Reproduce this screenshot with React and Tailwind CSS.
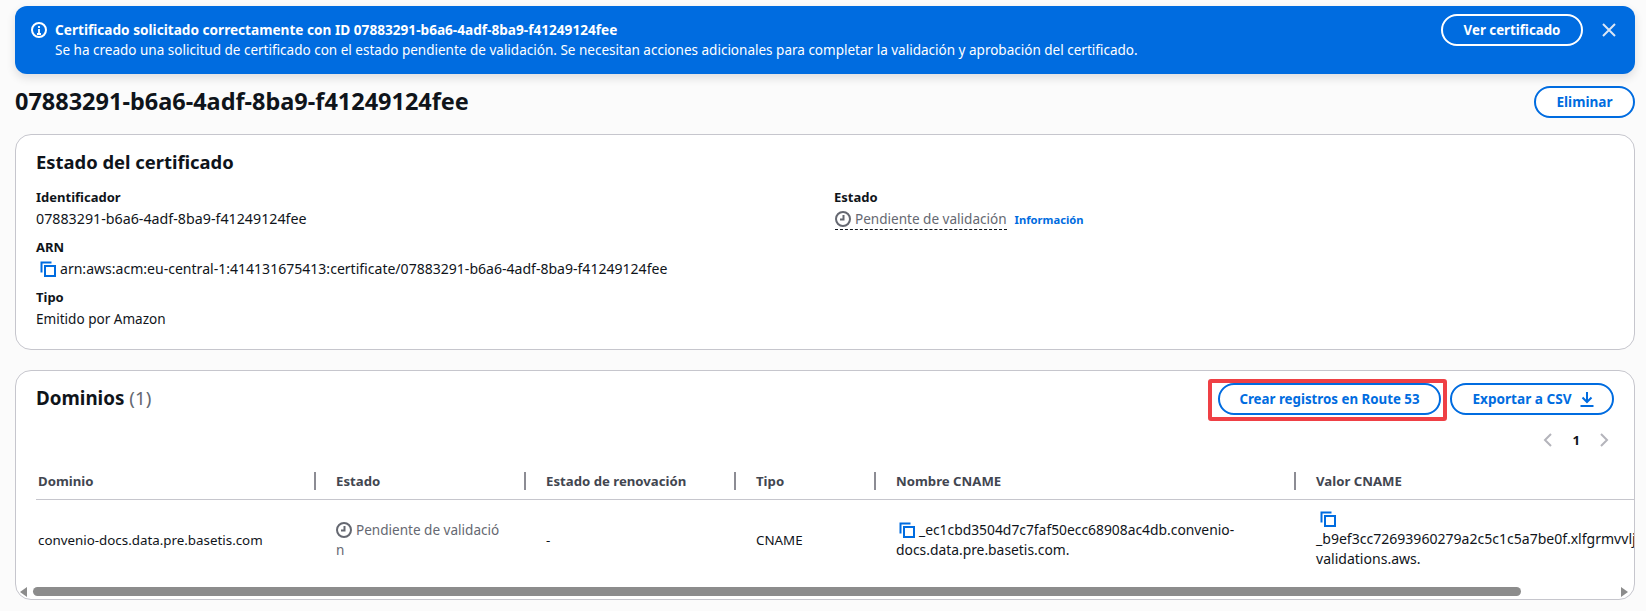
import React from "react";

const Copy = ({ className = "" }) => (
  <svg viewBox="0 0 16 16" className={`w-4 h-4 align-[-3px] ${className}`} fill="none" stroke="#006ce0" strokeWidth="2">
    <path d="M1.5 11.5V1.5H11.5" />
    <rect x="5" y="5" width="10" height="10" />
  </svg>
);

const Clock = () => (
  <svg viewBox="0 0 16 16" className="inline-block w-4 h-4 align-[-3px] mr-[4px]" fill="none" stroke="#656871" strokeWidth="2">
    <circle cx="8" cy="8" r="7" />
    <path d="M8.5 4v4.5H5" />
  </svg>
);

const Btn = ({ children, className = "" }) => (
  <button className={`h-[32px] rounded-full border-2 font-bold leading-[20px] flex items-center justify-center ${className}`}>
    {children}
  </button>
);

const Label = ({ children }) => <div className="font-bold text-[13px] leading-[20px] text-[#0f141a]">{children}</div>;

const Head = ({ children, first }) =>
  first ? (
    <div className="pl-[2px] h-[18px] flex items-center">{children}</div>
  ) : (
    <div className="border-l-2 border-[#8c8c94] pl-[20px] h-[18px] flex items-center">{children}</div>
  );

export default function App() {
  return (
    <div className="font-['Noto_Sans',sans-serif] bg-[#fbfbfb] min-h-[611px] w-full pt-[6px] pl-[15px] pr-[11px] text-[#0f141a] text-sm leading-[20px] overflow-hidden">
      {/* Banner */}
      <div className="h-[68px] rounded-xl bg-[#006ce0] text-white flex pl-[16px] pr-[18px] shadow-[0_4px_10px_rgba(0,7,22,0.12)]">
        <svg viewBox="0 0 16 16" className="w-4 h-4 mt-[16px] shrink-0" fill="none" stroke="white" strokeWidth="2">
          <circle cx="8" cy="8" r="7" />
          <path d="M8 7v5M6 12h4M8 4v2" strokeWidth="1.8" />
        </svg>
        <div className="pt-[14px] pl-[8px] flex-1">
          <div className="font-bold text-[13.63px]">Certificado solicitado correctamente con ID 07883291-b6a6-4adf-8ba9-f41249124fee</div>
          <div className="text-[13.52px]">Se ha creado una solicitud de certificado con el estado pendiente de validación. Se necesitan acciones adicionales para completar la validación y aprobación del certificado.</div>
        </div>
        <Btn className="mt-[8px] w-[142px] border-white text-white text-[13.3px]">Ver certificado</Btn>
        <svg viewBox="0 0 16 16" className="w-4 h-4 mt-[16px] ml-[18px] shrink-0" fill="none" stroke="#dbe6f5" strokeWidth="2">
          <path d="M2 2l12 12M14 2L2 14" />
        </svg>
      </div>

      {/* Title */}
      <div className="mt-[12px] flex items-center justify-between h-[32px]">
        <h1 className="font-bold text-[23.47px] leading-[30px] pb-[3px] text-[#0f141a]">07883291-b6a6-4adf-8ba9-f41249124fee</h1>
        <Btn className="w-[101px] border-[#006ce0] text-[#006ce0] text-[13.6px] bg-white">Eliminar</Btn>
      </div>

      {/* Status card */}
      <div className="mt-[16px] h-[216px] rounded-2xl border border-[#c6c6cd] bg-white pt-[15px] px-[20px]">
        <h2 className="font-bold text-[18.4px] leading-[24px]">Estado del certificado</h2>
        <div className="mt-[13px] grid grid-cols-[798px_1fr]">
          <div className="flex flex-col gap-2">
            <div className="flex flex-col gap-[2px]">
              <Label>Identificador</Label>
              <div className="text-[14.25px]">07883291-b6a6-4adf-8ba9-f41249124fee</div>
            </div>
            <div className="flex flex-col gap-[2px]">
              <Label>ARN</Label>
              <div className="text-[14.05px]">
                <Copy className="inline-block ml-[4px] mr-[4px]" />
                arn:aws:acm:eu-central-1:414131675413:certificate/07883291-b6a6-4adf-8ba9-f41249124fee
              </div>
            </div>
            <div className="flex flex-col gap-[2px]">
              <Label>Tipo</Label>
              <div className="text-[13.55px]">Emitido por Amazon</div>
            </div>
          </div>
          <div className="flex flex-col gap-[2px]">
            <Label>Estado</Label>
            <div className="flex items-start gap-[8px] text-[13.55px] ml-[1px]">
              <span className="text-[#656871] leading-[19px] pt-[1px] border-b border-dashed border-[#0f141a]">
                <Clock />
                Pendiente de validación
              </span>
              <span className="text-[#006ce0] font-bold text-[11.2px] leading-[22px]">Información</span>
            </div>
          </div>
        </div>
      </div>

      {/* Domains card */}
      <div className="mt-[20px] h-[230px] rounded-2xl border border-[#c6c6cd] bg-white overflow-hidden flex flex-col">
        <div className="pt-[12px] pl-[20px] pr-[20px] flex justify-between">
          <div className="pt-[3px] font-bold text-[18.8px] leading-[24px]">
            Dominios <span className="font-normal text-[#656871]">(1)</span>
          </div>
          <div className="flex gap-[9px]">
            <div className="relative">
              <Btn className="w-[223px] border-[#006ce0] text-[#006ce0] text-[13.3px]">Crear registros en Route 53</Btn>
              <div className="absolute -left-[10px] -right-[6px] -top-[4px] -bottom-[6px] border-4 border-[#ef4045] rounded-[3px]" />
            </div>
            <Btn className="w-[164px] gap-[7px] pl-[3px] border-[#006ce0] text-[#006ce0] text-[13.6px]">
              Exportar a CSV
              <svg viewBox="0 0 16 16" className="w-4 h-4" fill="none" stroke="#006ce0" strokeWidth="2">
                <path d="M8 1v10M3.5 6.5L8 11l4.5-4.5M1.5 15h13" />
              </svg>
            </Btn>
          </div>
        </div>
        <div className="mt-[15px] pr-[22px] h-[20px] flex justify-end items-center gap-[16px]">
          <svg viewBox="0 0 16 16" className="w-4 h-4" fill="none" stroke="#b4b4bb" strokeWidth="2"><path d="M11 2L5 8l6 6" /></svg>
          <span className="font-bold text-[13.2px]">1</span>
          <svg viewBox="0 0 16 16" className="w-4 h-4" fill="none" stroke="#b4b4bb" strokeWidth="2"><path d="M5 2l6 6-6 6" /></svg>
        </div>

        <div className="ml-[20px] overflow-hidden">
          <div className="grid grid-cols-[278px_210px_210px_140px_420px_440px] w-[1698px]">
            {/* head */}
            <div className="col-span-6 grid grid-cols-subgrid h-[50px] pt-[22px] border-b border-[#c6c6cd] font-bold text-[13.2px] text-[#424650]">
              <Head first>Dominio</Head>
              <Head>Estado</Head>
              <Head>Estado de renovación</Head>
              <Head>Tipo</Head>
              <Head>Nombre CNAME</Head>
              <Head>Valor CNAME</Head>
            </div>
            {/* row */}
            <div className="col-span-6 grid grid-cols-subgrid h-[80px] items-center text-[13.35px]">
              <div className="pl-[2px]">convenio-docs.data.pre.basetis.com</div>
              <div className="pl-[22px] pr-[4px]">
                <div className="text-[#656871] text-[13.55px] break-all w-[166px]">
                  <Clock />
                  Pendiente de validación
                </div>
              </div>
              <div className="pl-[22px]">-</div>
              <div className="pl-[22px]">CNAME</div>
              <div className="pl-[22px] pr-[40px] text-[13.85px]">
                <Copy className="inline-block ml-[3px] mr-[4px]" />
                _ec1cbd3504d7c7faf50ecc68908ac4db.convenio-docs.data.pre.basetis.com.
              </div>
              <div className="pl-[22px] pr-[16px] text-[14.05px]">
                <Copy className="block ml-[4px] mb-[2px]" />
                _b9ef3cc72693960279a2c5c1c5a7be0f.xlfgrmvvlj.acm-validations.aws.
              </div>
            </div>
          </div>
        </div>

        {/* scrollbar */}
        <div className="mt-auto h-[15px] flex items-center pl-[4px] pr-[6px]">
          <svg viewBox="0 0 8 10" className="w-[8px] h-[10px] shrink-0"><path d="M7 0v10L0 5z" fill="#8c8c8c" /></svg>
          <div className="ml-[5px] w-[1488px] h-[9px] rounded-full bg-[#8c8c8c]" />
          <div className="flex-1" />
          <svg viewBox="0 0 8 10" className="w-[8px] h-[10px] shrink-0"><path d="M1 0v10L8 5z" fill="#8c8c8c" /></svg>
        </div>
      </div>
    </div>
  );
}
